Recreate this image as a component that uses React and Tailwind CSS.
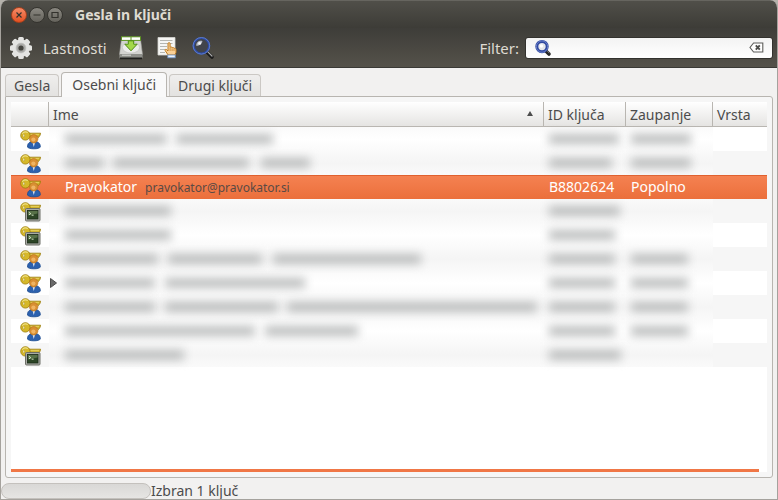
import React, { useState } from 'react';
import { clsx } from 'clsx';

// Widths of the blurred words: [gap before, width]
const keys = [
  { kind: 'person', name: [[0, 102], [9, 97]], id: 70, trust: 60 },
  { kind: 'person', name: [[0, 39], [9, 136], [12, 49]], id: 63, trust: 60 },
  { kind: 'person', label: 'Pravokator', email: 'pravokator@pravokator.si', keyId: 'B8802624', level: 'Popolno' },
  { kind: 'terminal', name: [[0, 106]], id: 71 },
  { kind: 'terminal', name: [[0, 106]], id: 66 },
  { kind: 'person', name: [[0, 93], [10, 94], [11, 148]], id: 66, trust: 57 },
  { kind: 'person', name: [[0, 90], [10, 140]], id: 66, trust: 57, expandable: true },
  { kind: 'person', name: [[0, 90], [10, 113], [9, 250]], id: 66, trust: 57 },
  { kind: 'person', name: [[0, 190], [10, 93]], id: 66, trust: 57 },
  { kind: 'terminal', name: [[0, 119]], id: 72 },
];

const tabs = ['Gesla', 'Osebni ključi', 'Drugi ključi'];

const KeyShape = () => (
  <>
    <path d="M9 3.2H20.6L20 5.4 18.4 7.6 17 6.2 15.5 7.4H9Z" fill="#d0b22c" stroke="#9a7c0a" strokeWidth="0.8" />
    <path d="M10 4.4H19" stroke="#ecd867" strokeWidth="0.8" />
    <circle cx="5.4" cy="5.4" r="4.7" fill="#d6b829" stroke="#9a7c0a" strokeWidth="0.8" />
    <path d="M2.4 3.8A3.6 3.6 0 0 1 7.8 2.6" fill="none" stroke="#efe083" strokeWidth="1.2" />
    <ellipse cx="3.8" cy="5.6" rx="0.8" ry="1.6" fill="#fffbe0" stroke="#a38814" strokeWidth="0.5" />
  </>
);

const KeyIcon = ({ kind }) => (
  <svg viewBox="0 0 22 20" className="w-[22px] h-5 block mt-px">
    <KeyShape />
    {kind === 'person' ? (
      <>
        <path d="M7.5 17C7.3 13.4 9.4 11.4 13.8 11.4S20.5 13.4 20.3 17C19.6 19.4 8.2 19.4 7.5 17Z" fill="#2c61ae" stroke="#1b4a8f" strokeWidth="0.8" />
        <path d="M12.5 12.6H15L13.8 17Z" fill="#e8eef7" />
        <circle cx="13.7" cy="8.8" r="4.2" fill="#d98f33" stroke="#bd741c" strokeWidth="0.7" />
        <circle cx="13.4" cy="9.6" r="2.1" fill="#f0b462" />
      </>
    ) : (
      <>
        <rect x="5.5" y="6.5" width="14.5" height="12.5" rx="1" fill="#a9aba5" stroke="#6c6e66" />
        <rect x="7.5" y="8.5" width="10.5" height="8.5" fill="#2c4526" stroke="#1b2b17" strokeWidth="0.8" />
        <path d="M8 9H17.6V11.4L8 13.6Z" fill="#577148" />
        <path d="M9 10.4 10.8 11.6 9 12.8M11.6 13.2H13.6" fill="none" stroke="#dff0cf" strokeWidth="0.9" />
      </>
    )}
  </svg>
);

const GearIcon = () => (
  <svg viewBox="0 0 24 24" className="w-6 h-6">
    <g fill="#e4e4e2">
      <rect x="9.2" y="1" width="5.6" height="22" rx="1.5" />
      <rect x="9.2" y="1" width="5.6" height="22" rx="1.5" transform="rotate(45 12 12)" />
      <rect x="9.2" y="1" width="5.6" height="22" rx="1.5" transform="rotate(90 12 12)" />
      <rect x="9.2" y="1" width="5.6" height="22" rx="1.5" transform="rotate(135 12 12)" />
      <circle cx="12" cy="12" r="8.8" />
    </g>
    <circle cx="12" cy="12" r="4.9" fill="#a9a9a6" stroke="#c2c2bf" strokeWidth="0.8" />
    <circle cx="12" cy="12" r="2.6" fill="#45443f" />
  </svg>
);

const ImportIcon = () => (
  <svg viewBox="0 0 24 24" className="w-6 h-6">
    <path d="M2.4 4H21.6L23.5 18.5H0.5Z" fill="#d3d3d0" stroke="#a5a5a1" strokeWidth="0.6" />
    <rect x="0.4" y="18" width="23.2" height="4.6" rx="1" fill="#8f908b" />
    <path d="M1 22.4H23" stroke="#20201e" strokeWidth="1.6" />
    <path d="M3 19.2H12" stroke="#d8d8d5" strokeWidth="1" />
    <ellipse cx="12" cy="11.5" rx="8.6" ry="5.6" fill="#ededeb" stroke="#bbbbb8" strokeWidth="0.6" />
    <rect x="2.5" y="0.8" width="19" height="3.6" fill="#fff" stroke="#5b9420" />
    <path d="M12 1V4" stroke="#5b9420" />
    <path d="M9.3 4.8H14.7V8.2H18.2L12 14.8 5.8 8.2H9.3Z" fill="#a4d84a" stroke="#4e8a12" />
  </svg>
);

const SignIcon = () => (
  <svg viewBox="0 0 24 24" className="w-6 h-6">
    <path d="M3 1.5H20V19H3Z" fill="#f6f6f4" stroke="#d6d6d2" strokeWidth="0.8" />
    <path d="M5 4.5H17.5M5 7.5H17.5M5 10.5H12M5 13.5H10M5 16.5H10" stroke="#b6b7b2" />
    <path d="M12.6 18.2 10.2 14.6C9.6 13.4 11 12.8 11.8 13.8L13 15V7.6C13 6.3 15.1 6.3 15.1 7.6V11.5C15.6 10.6 17 10.8 17.1 11.8 17.8 11.1 19 11.5 19 12.5 19.8 12 21 12.5 21 13.6V16.4L19.8 19H13Z" fill="#f9d096" stroke="#c07a1c" />
    <path d="M15.1 12V15M17.1 12.4V15M19 13V15" stroke="#c07a1c" strokeWidth="0.7" />
    <rect x="12.8" y="19" width="7.4" height="2.8" fill="#eaf1fa" stroke="#6d96cc" strokeWidth="0.8" />
  </svg>
);

const SearchIcon = () => (
  <svg viewBox="0 0 24 24" className="w-6 h-6">
    <path d="M16 16 21 21" stroke="#1b1b1b" strokeWidth="3.6" strokeLinecap="round" />
    <path d="M16.6 15.6 21 20" stroke="#a8a8a8" strokeWidth="1.2" strokeLinecap="round" />
    <circle cx="10.4" cy="9.8" r="7.8" fill="#41444a" stroke="#2d4aa3" strokeWidth="2.2" />
    <circle cx="10.4" cy="9.8" r="8.3" fill="none" stroke="#6482cc" strokeWidth="0.9" />
    <path d="M5.2 9.8C5 6.4 8 4.2 11.4 5 11.2 8 8.6 9.6 5.2 9.8Z" fill="#b5bac4" />
    <circle cx="8.6" cy="7.4" r="1.4" fill="#f4f6f9" />
  </svg>
);

const SmallSearchIcon = () => (
  <svg viewBox="0 0 18 18" className="w-[18px] h-[18px]">
    <path d="M12.4 12.4 15 15" stroke="#262626" strokeWidth="3.6" strokeLinecap="round" />
    <path d="M13.4 12.2 15.4 14.2" stroke="#8a8a8a" strokeWidth="0.9" />
    <circle cx="8" cy="7.6" r="5.2" fill="#e3e5ea" stroke="#3048a0" strokeWidth="3" />
    <circle cx="8" cy="7.6" r="5.7" fill="none" stroke="#6f86cc" strokeWidth="0.9" />
    <circle cx="7.4" cy="7" r="1.8" fill="#fff" />
  </svg>
);

const ClearIcon = () => (
  <svg viewBox="0 0 15 11" className="w-[15px] h-[11px]">
    <path d="M4.6 1H13.8V10H4.6L1 5.5Z" fill="#fff" stroke="#5d5d5a" strokeWidth="1.1" />
    <path d="M6.8 3.4 10.8 7.6M10.8 3.4 6.8 7.6" stroke="#4d4d4a" strokeWidth="1.9" />
  </svg>
);

const WindowButton = ({ label, close, children }) => (
  <button
    aria-label={label}
    className={clsx(
      'w-4 h-4 rounded-full border flex items-center justify-center',
      close
        ? 'bg-linear-to-b from-[#f58a66] to-[#e2501f] border-[#a5401d]'
        : 'bg-linear-to-b from-[#8a8881] to-[#65635c] border-[#35342f]'
    )}
  >
    <svg viewBox="0 0 8 8" className="w-2 h-2" fill="none" stroke="#33322d" strokeWidth="1.2">
      {children}
    </svg>
  </button>
);

const Blurred = ({ words }) => (
  <div className="flex items-center" aria-hidden="true">
    {words.map(([gap, width], i) => (
      <span
        key={i}
        className="h-2.5 bg-[#bcbebe] blur-[5px] shrink-0"
        style={{ width, marginLeft: gap }}
      />
    ))}
  </div>
);

const HeaderCell = ({ children, sorted, last }) => (
  <th className={clsx('p-0 font-normal text-left', !last && 'border-r border-[#b9b6b1]')}>
    <button className="w-full h-[25px] px-1 flex items-center justify-between">
      {children}
      {sorted && (
        <svg viewBox="0 0 6 5" className="w-1.5 h-[5px] mr-1.5 mb-0.5">
          <path d="M3 0 6 5H0Z" fill="#4c4c4c" />
        </svg>
      )}
    </button>
  </th>
);

const KeyRow = ({ item, odd, selected, onSelect }) => {
  const soft = !item.label && (odd
    ? 'bg-linear-to-b from-[#fafafa] via-[#f5f5f5] to-[#fafafa]'
    : 'bg-linear-to-b from-[#fafafa] via-white to-[#fafafa]');

  return (
    <tr
      onClick={onSelect}
      className={clsx(
        'h-6',
        selected
          ? 'bg-linear-to-b from-[#f58252] to-[#eb6f3b] text-white shadow-[inset_0_1px_0_#e0612f]'
          : odd ? 'bg-[#f6f6f6]' : 'bg-white'
      )}
    >
      <td className="p-0 pl-[9px]"><KeyIcon kind={item.kind} /></td>
      <td className={clsx('p-0', soft)}>
        <div className="flex items-center">
          <span className="w-4 flex justify-center shrink-0">
            {item.expandable && (
              <svg viewBox="0 0 7 10" className="w-[7px] h-2.5 mr-2">
                <path d="M0.5 0.5 6.5 5 0.5 9.5Z" fill="#6a6a6a" stroke="#4c4c4c" />
              </svg>
            )}
          </span>
          {item.label ? (
            <span>
              {item.label}
              <span className="ml-2 text-[12px] text-[#5a4a44]">{item.email}</span>
            </span>
          ) : (
            <Blurred words={item.name} />
          )}
        </div>
      </td>
      <td className={clsx('p-0 pl-[5px]', soft)}>
        {item.keyId || <Blurred words={[[0, item.id]]} />}
      </td>
      <td className={clsx('p-0 pl-[5px]', soft)}>
        {item.level || (item.trust && <Blurred words={[[0, item.trust]]} />)}
      </td>
      <td className="p-0" />
    </tr>
  );
};

const App = () => {
  const [activeTab, setActiveTab] = useState('Osebni ključi');
  const [selected, setSelected] = useState(2);
  const [filter, setFilter] = useState('');

  return (
    <div className="bg-[#b5b2ab]">
      <div className="min-h-screen flex flex-col rounded-t-lg overflow-hidden border border-t-0 border-[#a5a29d] bg-[#f2f1f0] text-[#4c4c4c] text-[14px] leading-5 font-['Noto_Sans',sans-serif]">
        <header className="h-7 flex items-center pl-2.5 bg-linear-to-b from-[#504f49] to-[#3d3c37] border-t border-[#66655f]">
          <div className="flex gap-0.5">
            <WindowButton label="Zapri" close><path d="M1.5 1.5 6.5 6.5M6.5 1.5 1.5 6.5" /></WindowButton>
            <WindowButton label="Skrči"><path d="M0.5 4H7.5" /></WindowButton>
            <WindowButton label="Razpni"><path d="M1 1.5H7V6.5H1Z" /></WindowButton>
          </div>
          <h1 className="ml-3 font-bold text-[14px] text-[#dfdbd2]">Gesla in ključi</h1>
        </header>

        <div className="h-10 flex items-center pl-2 pr-1 bg-linear-to-b from-[#3e3d39] to-[#55524a] border-b border-[#3a3935] text-[15px] text-[#dfdbd2]">
          <button className="flex items-center gap-2.5">
            <GearIcon />
            Lastnosti
          </button>
          <button className="ml-3" aria-label="Uvozi"><ImportIcon /></button>
          <button className="ml-3" aria-label="Podpiši"><SignIcon /></button>
          <button className="ml-3" aria-label="Najdi"><SearchIcon /></button>
          <label htmlFor="filter" className="ml-auto mr-1.5">Filter:</label>
          <div className="w-[248px] h-[22px] flex items-center pl-2 pr-2 rounded-[3px] border border-[#33322e] bg-linear-to-b from-[#f3f3f3] to-white">
            <SmallSearchIcon />
            <input
              id="filter"
              value={filter}
              onChange={(e) => setFilter(e.target.value)}
              className="flex-1 min-w-0 px-1 bg-transparent text-[14px] text-[#4c4c4c] outline-none"
            />
            <button aria-label="Počisti" onClick={() => setFilter('')}><ClearIcon /></button>
          </div>
        </div>

        <div className="flex-1 flex flex-col px-1 pt-1">
          <div role="tablist" className="flex items-end gap-0.5 h-6">
            {tabs.map((tab) => (
              <button
                key={tab}
                role="tab"
                aria-selected={tab === activeTab}
                onClick={() => setActiveTab(tab)}
                className={clsx(
                  'rounded-t border border-b-0',
                  tab === activeTab
                    ? 'relative z-10 h-[25px] -mb-px px-2.5 pb-px bg-[#f9f9f9] border-[#b8b5b0]'
                    : 'h-[22px] px-2 bg-linear-to-b from-[#efeeed] to-[#e3e2e0] border-[#cbc8c4]'
                )}
              >
                {tab}
              </button>
            ))}
          </div>

          <div className="flex-1 flex flex-col p-[5px] rounded-b-[3px] rounded-tr-[3px] border border-[#b8b5b0] bg-[#f6f6f6]">
            <div className="flex-1 flex flex-col bg-white">
              <table className="w-full table-fixed border-separate border-spacing-0">
                <colgroup>
                  <col className="w-[38px]" />
                  <col />
                  <col className="w-[82px]" />
                  <col className="w-[87px]" />
                  <col className="w-[54px]" />
                </colgroup>
                <thead>
                  <tr className="bg-linear-to-b from-white to-[#e4e3e1] shadow-[inset_0_-1px_0_#b9b6b1]">
                    <HeaderCell />
                    <HeaderCell sorted>Ime</HeaderCell>
                    <HeaderCell>ID ključa</HeaderCell>
                    <HeaderCell>Zaupanje</HeaderCell>
                    <HeaderCell last>Vrsta</HeaderCell>
                  </tr>
                </thead>
                <tbody>
                  {keys.map((item, i) => (
                    <KeyRow
                      key={i}
                      item={item}
                      odd={i % 2 === 1}
                      selected={i === selected}
                      onSelect={() => setSelected(i)}
                    />
                  ))}
                </tbody>
              </table>
              <div className="mt-auto mr-2 h-[3px] bg-[#f07746]" />
            </div>
          </div>
        </div>

        <footer className="h-[21px] flex items-center">
          <div className="w-[150px] h-4 mt-1 rounded-lg border border-[#c4c1bd] bg-linear-to-b from-[#d9d8d6] to-[#e6e5e3]" />
          <span className="mt-1">Izbran 1 ključ</span>
        </footer>
      </div>
    </div>
  );
};

export default App;
